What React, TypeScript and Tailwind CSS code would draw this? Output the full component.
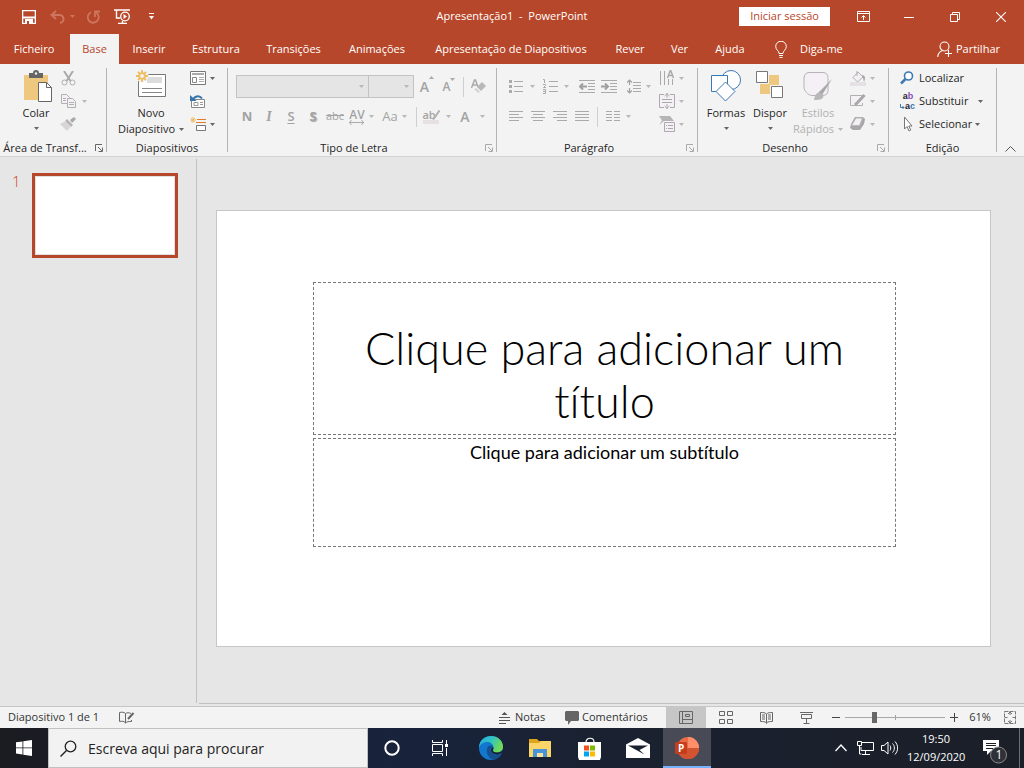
import type { ReactNode } from 'react';

type SvgProps = { w: number; h: number; children: ReactNode; className?: string };

function Svg({ w, h, children, className = '' }: SvgProps) {
  return (
    <svg width={w} height={h} viewBox={`0 0 ${w} ${h}`} fill="none" aria-hidden="true" className={`shrink-0 ${className}`}>
      {children}
    </svg>
  );
}

function Caret({ className = 'text-[#666]' }: { className?: string }) {
  return (
    <Svg w={5} h={3} className={className}>
      <path d="M0 0h5L2.5 3z" fill="currentColor" />
    </Svg>
  );
}

type ToolProps = { label: string; className?: string; caret?: string; dim?: boolean; children: ReactNode };

// icon button, optionally followed by a narrow drop-down arrow
function Tool({ label, className = 'w-[22px]', caret, dim = false, children }: ToolProps) {
  return (
    <button aria-label={label} className="flex items-center h-[22px] hover:bg-[#dcdcdc]">
      <span className={`flex items-center justify-center ${className}`}>{children}</span>
      {caret && (
        <span className={`flex items-center justify-center ${caret}`}>
          <Caret className={dim ? 'text-[#b8b8b8]' : 'text-[#666]'} />
        </span>
      )}
    </button>
  );
}

function Separator() {
  return <div className="w-px my-1 bg-[#b4b4b4] shrink-0"></div>;
}

type GroupProps = { title: string; className: string; launcher?: 'dark' | 'light'; children: ReactNode };

function Group({ title, className, launcher, children }: GroupProps) {
  return (
    <section className={`flex flex-col shrink-0 ${className}`}>
      <div className="flex h-[76px]">{children}</div>
      <div className="flex items-center h-4">
        <h2 className={`grow text-center whitespace-nowrap ${launcher ? 'pr-[5px]' : ''}`}>{title}</h2>
        {launcher && (
          <button aria-label={`Opções de ${title}`} className={`mr-[3px] ${launcher === 'dark' ? 'text-[#666]' : 'text-[#aaa]'}`}>
            <Svg w={8} h={8}>
              <path d="M.5 7V.5H7M3 3l4 4M7.5 3.5v4h-4" stroke="currentColor" />
            </Svg>
          </button>
        )}
      </div>
    </section>
  );
}

const TABS = [
  { name: 'Ficheiro', width: 'w-[70px] pr-[2px]' },
  { name: 'Base', width: 'w-[49px]' },
  { name: 'Inserir', width: 'w-[60px]' },
  { name: 'Estrutura', width: 'w-[74px]' },
  { name: 'Transições', width: 'w-[81px]' },
  { name: 'Animações', width: 'w-[86px]' },
  { name: 'Apresentação de Diapositivos', width: 'w-[182px]' },
  { name: 'Rever', width: 'w-[56px]' },
  { name: 'Ver', width: 'w-[43px]' },
  { name: 'Ajuda', width: 'w-[58px]' },
];

function TitleBar() {
  return (
    <header className="grid grid-cols-[1fr_auto_1fr] items-center h-[34px] pb-px text-white">
      <div className="flex items-center pl-[22px]">
        <button aria-label="Guardar">
          <Svg w={14} h={14}>
            <path d="M.5.5h13v13H.5z" stroke="white" strokeWidth="1.6" />
            <path d="M1 6.5h12v2H1zM3 9h8v5H3z" fill="white" />
            <path d="M5 11h2v3H5z" fill="#b7472a" />
          </Svg>
        </button>
        <button aria-label="Anular" className="flex items-center gap-[5px] ml-[14px]">
          <Svg w={15} h={14}>
            <path d="M1 5h8a4 4 0 0 1 1 8M6 1L1.5 5 6 9" stroke="#cd765f" strokeWidth="2" />
          </Svg>
          <Caret className="text-[#cd765f]" />
        </button>
        <button aria-label="Repetir" className="ml-[11px]">
          <Svg w={14} h={14}>
            <path d="M5 2.2A5.5 5.5 0 1 0 10 2.5M9 7V1.5h5" stroke="#cd765f" strokeWidth="1.8" />
          </Svg>
        </button>
        <button aria-label="Iniciar apresentação" className="ml-[14px]">
          <Svg w={17} h={15}>
            <path d="M0 1h16M2.5 1v8H6M4 14.5h9M8.5 12v2" stroke="white" strokeWidth="1.4" />
            <circle cx="11" cy="7.5" r="4.3" stroke="white" strokeWidth="1.3" />
            <path d="M9.5 5v5L13 7.5z" fill="white" />
          </Svg>
        </button>
        <button aria-label="Personalizar barra de acesso rápido" className="ml-[18px]">
          <Svg w={5} h={7}>
            <path d="M0 .5h5" stroke="white" />
            <path d="M0 3h5L2.5 6.5z" fill="white" />
          </Svg>
        </button>
      </div>
      <h1 className="whitespace-pre">Apresentação1  -  PowerPoint</h1>
      <div className="flex items-center justify-end">
        <button className="w-[91px] h-[19px] mr-[10px] bg-white text-[#b7472a]">Iniciar sessão</button>
        <button aria-label="Opções de apresentação do friso" className="flex justify-center w-[46px]">
          <Svg w={13} h={11}>
            <path d="M.5.5h12v10H.5zM1 2.5h11M6.5 9V5M4.5 6.5l2-2 2 2" stroke="white" />
          </Svg>
        </button>
        <button aria-label="Minimizar" className="flex justify-center w-[46px]">
          <Svg w={10} h={10}>
            <path d="M0 5.5h10" stroke="white" />
          </Svg>
        </button>
        <button aria-label="Restaurar" className="flex justify-center w-[46px]">
          <Svg w={10} h={10}>
            <path d="M.5 2.5h7v7h-7zM2.5 2.5v-2h7v7h-2" stroke="white" />
          </Svg>
        </button>
        <button aria-label="Fechar" className="flex justify-center w-[46px]">
          <Svg w={10} h={10}>
            <path d="M0 0l10 10M10 0L0 10" stroke="white" strokeWidth="1.1" />
          </Svg>
        </button>
      </div>
    </header>
  );
}

function TabRow() {
  return (
    <nav className="flex items-center h-[30px] text-white">
      {TABS.map((tab) => (
        <button
          key={tab.name}
          className={`h-full shrink-0 whitespace-nowrap ${tab.width} ${tab.name === 'Base' ? 'bg-[#f3f3f3] text-[#b7472a]' : ''}`}
        >
          {tab.name}
        </button>
      ))}
      <button className="flex items-center gap-[13px] ml-4">
        <Svg w={12} h={17}>
          <path d="M4 12.5c0-3-3.3-3.500-3.300-7a5.200 5.200 0 0 1 10.600 0c0 3.500-3.300 4-3.300 7zM4 14.500h4M4.500 16.500h3" stroke="white" />
        </Svg>
        Diga-me
      </button>
      <button className="flex items-center gap-[4px] ml-auto mr-6">
        <Svg w={15} h={17}>
          <circle cx="7.500" cy="5.500" r="4.500" stroke="white" strokeWidth="1.100" />
          <path d="M.7 16c.3-3.500 2-5.500 4.500-6.300M11.500 9v7M8 12.500h7" stroke="white" strokeWidth="1.100" />
        </Svg>
        Partilhar
      </button>
    </nav>
  );
}

function Ribbon() {
  return (
    <div className="flex h-[93px] bg-[#f3f3f3] border-b border-[#d2d2d2] text-[#262626] overflow-hidden">
      <Group title="Área de Transf..." className="w-[106px]" launcher="dark">
        <button className="flex flex-col items-center w-[50px] ml-[11px] pt-[6px]">
          <Svg w={29} h={33} className="ml-1">
            <path d="M0 5h24v25H0z" fill="#edc87e" />
            <path d="M5 3h4a3 3 0 0 1 6 0h4v5H5z" fill="#666" />
            <circle cx="12" cy="3.500" r="1.200" fill="#f3f3f3" />
            <path d="M14.500 12.500h8l5 5v14h-13z" fill="white" stroke="#666" />
            <path d="M22.500 12.500v5h5" stroke="#666" />
          </Svg>
          <span className="leading-4 mt-[2px]">Colar</span>
          <span className="flex items-center h-[14px]"><Caret /></span>
        </button>
        <div className="flex flex-col gap-px pt-[3px] -ml-[4px]">
          <Tool label="Cortar">
            <Svg w={15} h={15}>
              <path d="M3 0l6.500 10M12 0L5.500 10" stroke="#aaa" strokeWidth="2" />
              <circle cx="3.500" cy="11.500" r="2.500" stroke="#b0b0b0" />
              <circle cx="11.500" cy="11.500" r="2.500" stroke="#b0b0b0" />
            </Svg>
          </Tool>
          <Tool label="Copiar" caret="w-[11px]" dim>
            <Svg w={15} h={14}>
              <path d="M.5.5h5l3 3v6h-8z" fill="#f5eff6" stroke="#b0b0b0" />
              <path d="M6.500 4.500h5l3 3v6h-8z" fill="#f5eff6" stroke="#b0b0b0" />
              <path d="M2 4.500h3M2 6.500h3M8 8.500h5M8 10.500h5" stroke="#b0b0b0" />
            </Svg>
          </Tool>
          <Tool label="Pincel de Formatação">
            <Svg w={16} h={14}>
              <path d="M10 3l4-3 2 2-4 4z" fill="#a8a8a8" />
              <path d="M7 2l6 6-2 2-6-6z" fill="#b5b5b5" />
              <path d="M5 4.500l5.500 5.500L7 14 0 7z" fill="#d8d4d8" />
            </Svg>
          </Tool>
        </div>
      </Group>
      <Separator />

      <Group title="Diapositivos" className="w-[120px]">
        <button className="flex flex-col items-center w-[72px] ml-[8px] pt-[6px]">
          <Svg w={31} h={29}>
            <path d="M2.500 4.500h27v22h-27z" fill="white" stroke="#777" />
            <path d="M6 18.500h20M6 22.500h20" stroke="#888" />
            <path d="M11 7h15v6H11z" fill="#dcdcdc" />
            <circle cx="6" cy="6" r="6.500" fill="#f3f3f3" />
            <circle cx="6" cy="6" r="2.800" stroke="#edbd63" strokeWidth="1.800" />
            <path d="M6 0v3M6 9v3M0 6h3M9 6h3M2 2l2 2M8 8l2 2M10 2L8 4M4 8l-2 2" stroke="#edbd63" strokeWidth="1.800" />
          </Svg>
          <span className="leading-4 mt-[6px]">Novo</span>
          <span className="flex items-center gap-1 leading-4 whitespace-nowrap">Diapositivo <Caret /></span>
        </button>
        <div className="flex flex-col gap-px pt-[3px]">
          <Tool label="Esquema" caret="w-[6px]">
            <Svg w={16} h={14}>
              <path d="M.5.5h15v13H.5z" fill="white" stroke="#777" />
              <path d="M2 3h12" stroke="#aaa" strokeWidth="2" />
              <path d="M2.500 6.500h4v5h-4z" stroke="#888" />
              <path d="M9 6.500h5M9 8.500h5M9 10.500h5" stroke="#aaa" />
            </Svg>
          </Tool>
          <Tool label="Repor">
            <Svg w={16} h={14}>
              <path d="M1.500 5.500h13v8h-13z" fill="white" stroke="#888" />
              <path d="M4 8.500h4v3H4zM10 8.500h3M10 10.500h3" stroke="#999" />
              <path d="M3 6c1-3.500 6-5.500 9-1.500" stroke="#3975ad" strokeWidth="2" />
              <path d="M0 1v6h6.500z" fill="#3975ad" />
            </Svg>
          </Tool>
          <Tool label="Secção" caret="w-[6px]">
            <Svg w={16} h={15}>
              <path d="M3 0v6M0 3h6M1 1l4 4M5 1L1 5" stroke="#edbd63" />
              <path d="M7 2.500h9M6 5.500h10" stroke="#e07b29" />
              <path d="M6.500 8.500h9v5h-9z" fill="white" stroke="#777" />
            </Svg>
          </Tool>
        </div>
      </Group>
      <Separator />

      <Group title="Tipo de Letra" className="w-[268px]" launcher="light">
        <div className="flex flex-col gap-[7px] pl-2 pt-[11px] text-[#a3a3a3]">
          <div className="flex items-center h-[23px]">
            <FontSelect label="Tipo de letra" className="w-[133px]" />
            <FontSelect label="Tamanho" className="w-[46px] -ml-px" />
            <span className="w-[2px]"></span>
            <Tool label="Aumentar tamanho">
              <span className="text-[14px] font-semibold">A</span>
              <Svg w={5} h={3} className="self-start"><path d="M0 3h5L2.500 0z" fill="#aaa" /></Svg>
            </Tool>
            <Tool label="Diminuir tamanho">
              <span className="text-[12px] font-semibold">A</span>
              <Svg w={5} h={3} className="self-start"><path d="M0 0h5L2.500 3z" fill="#aaa" /></Svg>
            </Tool>
            <div className="w-px h-5 ml-[3px] bg-[#cfcfcf]"></div>
            <Tool label="Limpar formatação" className="w-[28px]">
              <Svg w={15} h={15}>
                <path d="M.5 9l3-8h1l2.500 7M1.500 6h4.500" stroke="#aaa" strokeWidth="1.500" />
                <path d="M11 3l4 4-5 5-4-4z" fill="#b8b8b8" />
                <path d="M5 9l4 4-1.500 1L3.500 10.500z" fill="#d0d0d0" />
              </Svg>
            </Tool>
          </div>
          <div className="flex items-center h-[23px] text-[13px]">
            <Tool label="Negrito"><b>N</b></Tool>
            <Tool label="Itálico"><i className="font-['Liberation_Serif',serif] font-bold text-[14px]">I</i></Tool>
            <Tool label="Sublinhado"><u className="font-semibold underline-offset-2">S</u></Tool>
            <Tool label="Sombra"><b className="[text-shadow:1px_1px_1px_#aaa]">S</b></Tool>
            <Tool label="Rasurado"><s className="text-[11px]">abc</s></Tool>
            <Tool label="Espaçamento entre carateres" caret="w-[6px]" dim>
              <span className="flex flex-col items-center">
                <span className="text-[12px] leading-[11px] font-semibold">AV</span>
                <Svg w={15} h={5}><path d="M0 2.500h15M2.500 0L.5 2.500l2 2.500M12.500 0l2 2.500-2 2.500" stroke="#aaa" /></Svg>
              </span>
            </Tool>
            <span className="w-[5px]"></span>
            <Tool label="Maiúsculas/Minúsculas" caret="w-[6px]" dim>Aa</Tool>
            <div className="w-px h-5 ml-[9px] bg-[#cfcfcf]"></div>
            <Tool label="Cor de realce" className="w-[28px]" caret="w-[6px]" dim>
              <span className="flex flex-col items-center">
                <span className="flex items-end text-[11px] leading-[11px] font-semibold">
                  ab
                  <Svg w={8} h={10} className="-ml-1"><path d="M7.500.5L3 7 1 9.500" stroke="#b0b0b0" strokeWidth="2" /></Svg>
                </span>
                <span className="w-4 h-1 bg-[#e4e0e4]"></span>
              </span>
            </Tool>
            <Tool label="Cor do tipo de letra" className="w-[28px]" caret="w-[6px]" dim>
              <span className="text-[14px] font-semibold">A</span>
            </Tool>
          </div>
        </div>
      </Group>
      <Separator />

      <Group title="Parágrafo" className="w-[200px]" launcher="light">
        <div className="flex flex-col gap-[7px] w-[154px] pl-2 pt-[11px]">
          <div className="flex items-center h-[23px]">
            <Tool label="Marcas" caret="w-[10px]" dim>
              <Svg w={14} h={15}>
                <path d="M5 2.500h9M5 7.500h9M5 12.500h9" stroke="#aaa" />
                <path d="M0 1h3v3H0zM0 6h3v3H0zM0 11h3v3H0z" fill="#aaa" />
              </Svg>
            </Tool>
            <Tool label="Numeração" className="w-[26px]" caret="w-[6px]" dim>
              <Svg w={15} h={15}>
                <path d="M6 2.500h9M6 7.500h9M6 12.500h9M0 .5h1.500V4M0 5.500h2.500v1L.5 8.500H3M0 10.500h2.500v4H0M0 12.500h2" stroke="#aaa" />
              </Svg>
            </Tool>
            <span className="w-[7px]"></span>
            <Tool label="Diminuir nível">
              <Svg w={16} h={13}>
                <path d="M0 .5h16M9 3.500h7M9 6.500h7M9 9.500h7M0 12.500h16" stroke="#aaa" />
                <path d="M1 6.500h7M4 3.500l-3 3 3 3" stroke="#a0a0a0" strokeWidth="2" />
              </Svg>
            </Tool>
            <Tool label="Aumentar nível">
              <Svg w={16} h={13}>
                <path d="M0 .5h16M9 3.500h7M9 6.500h7M9 9.500h7M0 12.500h16" stroke="#aaa" />
                <path d="M0 6.500h7M4 3.500l3 3-3 3" stroke="#a0a0a0" strokeWidth="2" />
              </Svg>
            </Tool>
            <span className="w-[3px]"></span>
            <Tool label="Espaçamento entre linhas" caret="w-[6px]" dim>
              <Svg w={14} h={15}>
                <path d="M6 3.500h8M6 6.500h8M6 9.500h8M6 12.500h8" stroke="#aaa" />
                <path d="M2.500 1v5M2.500 9v5M0 3.500L2.500 1 5 3.500M0 11.500L2.500 14 5 11.500" stroke="#a0a0a0" strokeWidth="1.200" />
              </Svg>
            </Tool>
          </div>
          <div className="flex items-center h-[23px]">
            <Tool label="Alinhar à esquerda">
              <Svg w={14} h={11}><path d="M0 .5h14M0 3.500h10M0 6.500h14M0 9.500h10" stroke="#aaa" /></Svg>
            </Tool>
            <Tool label="Centrar">
              <Svg w={14} h={11}><path d="M0 .5h14M2 3.500h10M0 6.500h14M2 9.500h10" stroke="#aaa" /></Svg>
            </Tool>
            <Tool label="Alinhar à direita">
              <Svg w={14} h={11}><path d="M0 .5h14M4 3.500h10M0 6.500h14M4 9.500h10" stroke="#aaa" /></Svg>
            </Tool>
            <Tool label="Justificar">
              <Svg w={14} h={11}><path d="M0 .5h14M0 3.500h14M0 6.500h14M0 9.500h14" stroke="#aaa" /></Svg>
            </Tool>
            <div className="w-px h-5 mx-1 bg-[#cfcfcf]"></div>
            <Tool label="Colunas" caret="w-[8px]" dim>
              <Svg w={14} h={11}><path d="M0 .5h14M0 3.500h14M0 6.500h14M0 9.500h14" stroke="#aaa" strokeDasharray="6 2" /></Svg>
            </Tool>
          </div>
        </div>
        <div className="flex flex-col gap-px pl-[5px] pt-[3px]">
          <Tool label="Direção do texto" caret="w-[6px]" dim>
            <Svg w={16} h={16}>
              <path d="M1.500 1v14M5.500 1v14M9.500 9v6M13.500 9v6" stroke="#aaa" />
              <path d="M8.500 8l3-8 3 8M9.500 5.500h4" stroke="#aaa" strokeWidth="1.500" />
            </Svg>
          </Tool>
          <Tool label="Alinhar texto" caret="w-[6px]" dim>
            <Svg w={16} h={16}>
              <path d="M5 1.500H.5v13H5M11 1.500h4.500v13H11" fill="#f5eff6" stroke="#b0a8b0" />
              <path d="M8 0v5M8 11v5M5.500 3L8 .7 10.500 3M5.500 13L8 15.300l2.500-2.300M3 6.500h10M3 9.500h10" stroke="#aaa" />
            </Svg>
          </Tool>
          <Tool label="Converter em SmartArt" caret="w-[6px]" dim>
            <Svg w={16} h={16}>
              <path d="M0 0h11l4 5H5L0 9l3-4.500z" fill="#b5b5b5" />
              <path d="M5.500 6.500h10v9h-10z" fill="#f5eff6" stroke="#b0a8b0" />
              <path d="M7 9.500h1M9 9.500h5M7 12.500h1M9 12.500h5" stroke="#aaa" />
            </Svg>
          </Tool>
        </div>
      </Group>
      <Separator />

      <Group title="Desenho" className="w-[190px]" launcher="light">
        <button className="flex flex-col items-center w-[44px] ml-[6px] pt-[6px]">
          <Svg w={30} h={32}>
            <circle cx="20" cy="10" r="9.500" fill="white" stroke="#3c78b4" />
            <path d="M.5 5.500h16v16H.5z" fill="white" stroke="#3c78b4" />
            <path d="M14.500 12L24 21.500 14.500 31 5 21.500z" fill="white" stroke="#3c78b4" />
          </Svg>
          <span className="leading-4 mt-[3px]">Formas</span>
          <span className="flex items-center h-[14px]"><Caret /></span>
        </button>
        <button className="flex flex-col items-center w-[44px] pt-[6px]">
          <Svg w={28} h={32}>
            <path d="M13 5h10v10h-9v9H4V14h9z" fill="#edc87e" />
            <path d="M.5 1.500h11v11H.5zM15.500 16.500h11v11h-11z" fill="white" stroke="#777" />
          </Svg>
          <span className="leading-4 mt-[3px]">Dispor</span>
          <span className="flex items-center h-[14px]"><Caret /></span>
        </button>
        <button className="flex flex-col items-center w-[52px] pt-[6px] text-[#b1b1b1]">
          <Svg w={30} h={32}>
            <path d="M6 2.500h14c3 0 5 2 5 5v13c0 4-3 5-6 5H9c-4 0-8-5-8-8V8c0-3 2-5.500 5-5.500z" fill="#f5eff6" stroke="#b4b4b4" />
            <path d="M29 9L19 25l-4-2z" fill="#a8a8a8" />
            <path d="M18 23c-5-1-6 2-7 7 6 0 11-1 9-6z" fill="#b8b8b8" />
          </Svg>
          <span className="leading-4 mt-[3px]">Estilos</span>
          <span className="flex items-center gap-1 leading-4 whitespace-nowrap">Rápidos <Caret className="text-[#b8b8b8]" /></span>
        </button>
        <div className="flex flex-col gap-px pl-[4px] pt-[3px]">
          <Tool label="Preenchimento da forma" className="w-[20px]" caret="w-[8px]" dim>
            <Svg w={17} h={16}>
              <path d="M8 2l5 5-5.500 5L3 7.500zM7 6V1" fill="#f5eff6" stroke="#b0b0b0" />
              <path d="M12 5c3 0 4 3 2 7l-1-4z" fill="#a8a8a8" />
              <path d="M0 12h16v4H0z" fill="#e4e0e4" />
            </Svg>
          </Tool>
          <Tool label="Contorno da forma" className="w-[20px]" caret="w-[8px]" dim>
            <Svg w={16} h={14}>
              <path d="M12 1.500H.5v10h12V9" fill="#f5eff6" stroke="#b0b0b0" />
              <path d="M14.500 1L8 8l-3 3" stroke="#a8a8a8" strokeWidth="3" />
            </Svg>
          </Tool>
          <Tool label="Efeitos da forma" className="w-[20px]" caret="w-[8px]" dim>
            <Svg w={16} h={14}>
              <path d="M5 0h8l2 2-1 5-4 6H3L0 11 1 7z" fill="#a8a8a8" />
              <path d="M6 1h6.500L9.500 8.500h-8z" fill="#f5eff6" stroke="#b8b8b8" />
            </Svg>
          </Tool>
        </div>
      </Group>
      <Separator />

      <Group title="Edição" className="w-[107px]">
        <div className="flex flex-col gap-px pl-[11px] pt-[3px]">
          <button className="flex items-center gap-[5px] h-[22px]">
            <Svg w={14} h={14}>
              <circle cx="8.500" cy="5" r="4" fill="white" stroke="#3c78b4" strokeWidth="1.600" />
              <path d="M5.500 8L1 12.500" stroke="#3c78b4" strokeWidth="2.500" />
            </Svg>
            Localizar
          </button>
          <button className="flex items-center gap-[3px] h-[22px] whitespace-nowrap">
            <span className="flex flex-col w-4 text-[9px] font-bold font-['Liberation_Sans',sans-serif]">
              <span className="leading-[10px]">a<span className="text-[#8a4fbe]">b</span></span>
              <span className="flex items-center leading-[10px]">
                <Svg w={5} h={5}><path d="M.5 0v3.500H4M2.500 2L4 3.500 2.500 5" stroke="#3c78b4" /></Svg>
                <span>a<span className="text-[#3c78b4]">c</span></span>
              </span>
            </span>
            Substituir
            <span className="pl-[7px]"><Caret /></span>
          </button>
          <button className="flex items-center gap-[5px] h-[22px] whitespace-nowrap">
            <Svg w={14} h={16}>
              <path d="M4.500 1v12l2.500-2.500 2 4.500 1.800-1-2-4H12z" fill="white" stroke="#777" />
            </Svg>
            <span className="flex items-center gap-[3px]">Selecionar <Caret /></span>
          </button>
        </div>
      </Group>
      <Separator />
      <button aria-label="Fechar o friso" className="flex items-end ml-auto mr-2 pb-1">
        <Svg w={11} h={6}>
          <path d="M.5 5.500l5-5 5 5" stroke="#555" />
        </Svg>
      </button>
    </div>
  );
}

function FontSelect({ label, className }: { label: string; className: string }) {
  return (
    <div className={`relative shrink-0 ${className}`}>
      <select aria-label={label} disabled className="block w-full h-[23px] appearance-none bg-[#e5e5e5] border border-[#c3c3c3]">
        <option></option>
      </select>
      <span className="absolute right-[5px] top-[10px]"><Caret className="text-[#b8b8b8]" /></span>
    </div>
  );
}

function StatusBar() {
  return (
    <footer className="flex items-center h-[22px] bg-[#f3f3f3] border-t border-[#c6c6c6] text-[#333]">
      <span className="w-[111px] pl-2 whitespace-nowrap">Diapositivo 1 de 1</span>
      <button aria-label="Verificação ortográfica" className="ml-2">
        <Svg w={16} h={13}>
          <path d="M12 2.500c-2-1-4-1-5.500 0C5 1 3 1 .5 1.500v9c2.500-.5 4.500-.5 6 1.500 1.500-1.500 3-1.500 6-1.500V9M6.500 2.500V12" stroke="#666" />
          <path d="M14.500 2L9 8" stroke="#666" strokeWidth="2" />
        </Svg>
      </button>
      <button className="flex items-center gap-[5px] ml-auto">
        <Svg w={11} h={12}>
          <path d="M0 5.500h11M0 8.500h11M0 11.500h7" stroke="#555" />
          <path d="M2.500 3h6l-3-3z" fill="#555" />
        </Svg>
        <span className="w-[50px] text-left">Notas</span>
      </button>
      <button className="flex items-center gap-[3px]">
        <Svg w={14} h={14}>
          <path d="M1 0h12l1 1v8l-1 1H6l-3 4v-4H1L0 9V1z" fill="#666" />
        </Svg>
        <span className="w-[84px] text-left">Comentários</span>
      </button>
      <button aria-label="Normal" className="flex items-center justify-center w-10 h-full bg-[#c6c6c6]">
        <Svg w={14} h={13}>
          <path d="M.5.5h13v12H.5zM3.500 1v11M4 8.500h9M6.500 3.500h4v2h-4z" stroke="#666" />
        </Svg>
      </button>
      <button aria-label="Organização de Diapositivos" className="flex items-center justify-center w-10 h-full">
        <Svg w={14} h={13}>
          <path d="M.5.5h5v4h-5zM8.500.5h5v4h-5zM.5 8.500h5v4h-5zM8.500 8.500h5v4h-5z" stroke="#666" />
        </Svg>
      </button>
      <button aria-label="Vista de Leitura" className="flex items-center justify-center w-10 h-full">
        <Svg w={13} h={12}>
          <path d="M6.500 2C5 .5 3 .5.5.5v9c2.500 0 4.500 0 6 1.500 1.500-1.500 3.500-1.500 6-1.500v-9c-2.500 0-4.500 0-6 1.500zv9.500M2 3h3M2 5h3M2 7h3M8 3h3M8 5h3M8 7h3" stroke="#666" />
        </Svg>
      </button>
      <button aria-label="Apresentação de Diapositivos" className="flex items-center justify-center w-10 h-full">
        <Svg w={13} h={12}>
          <path d="M0 .5h13M1.500 2.500h10v4h-10zM6.500 7v4M3.500 11.500h6" stroke="#666" />
        </Svg>
      </button>
      <button aria-label="Reduzir" className="ml-[5px]">
        <Svg w={9} h={9}><path d="M1 4.500h8" stroke="#444" /></Svg>
      </button>
      <div className="relative flex items-center w-[100px] ml-[5px]">
        <span className="absolute left-1/2 w-px h-[5px] bg-[#a0a0a0]"></span>
        <input
          type="range"
          aria-label="Zoom"
          defaultValue={28}
          className="relative w-full h-[11px] appearance-none bg-[linear-gradient(#a8a8a8,#a8a8a8)] bg-[length:100%_1px] bg-center bg-no-repeat [&::-webkit-slider-thumb]:appearance-none [&::-webkit-slider-thumb]:w-[5px] [&::-webkit-slider-thumb]:h-[11px] [&::-webkit-slider-thumb]:bg-[#666]"
        />
      </div>
      <button aria-label="Ampliar" className="ml-[5px]">
        <Svg w={9} h={9}><path d="M0 4.500h8M4.500 0v9" stroke="#444" /></Svg>
      </button>
      <button className="w-[36px] pl-[6px]">61%</button>
      <button aria-label="Ajustar à janela" className="ml-[9px] mr-2">
        <Svg w={12} h={13}>
          <path d="M.5.5h11v12H.5zM6 1v3M6 9v3M1 6.500h2.500M8.500 6.500H11" stroke="#777" strokeDasharray="4 1" />
          <path d="M4 3l2-2 2 2M4 10l2 2 2-2" stroke="#777" />
        </Svg>
      </button>
    </footer>
  );
}

function Taskbar() {
  return (
    <div className="flex h-10 text-white bg-[linear-gradient(90deg,#1b1c22_0%,#1b1c24_5%,#18233c_38%,#1a2130_60%,#1b1f28_100%)]">
      <button aria-label="Iniciar" className="flex items-center justify-center w-12 shrink-0">
        <Svg w={16} h={16}>
          <path d="M0 2.300l6.500-.9v6.100H0zM7.300 1.300L16 0v7.500H7.300zM0 8.300h6.500v6.200L0 13.600zM7.300 8.300H16V16l-8.700-1.300z" fill="white" />
        </Svg>
      </button>
      <label className="flex items-center w-[320px] shrink bg-[#f2f2f2] border border-[#c0c0c0] pl-[11px]">
        <Svg w={17} h={17}>
          <circle cx="10.500" cy="6.500" r="5.300" stroke="#222" strokeWidth="1.300" />
          <path d="M6.500 10.500L.5 16.500" stroke="#222" strokeWidth="1.400" />
        </Svg>
        <input
          type="text"
          aria-label="Pesquisar"
          placeholder="Escreva aqui para procurar"
          className="grow min-w-0 pl-[11px] bg-transparent outline-none text-[14px] text-black placeholder:text-[#222]"
        />
      </label>
      <button aria-label="Cortana" className="flex items-center justify-center w-12">
        <Svg w={16} h={16}><circle cx="8" cy="8" r="6.700" stroke="white" strokeWidth="2" /></Svg>
      </button>
      <button aria-label="Vista de Tarefas" className="flex items-center justify-center w-12 mr-[3px]">
        <Svg w={16} h={16}>
          <path d="M.5 0v2.500h10V0M.5 4.500h10v7H.5zM.5 16v-2.500h10V16M14.500 0v4M14.500 8v8" stroke="white" />
          <path d="M13 4h3v3h-3z" fill="white" />
        </Svg>
      </button>
      <div className="flex gap-px">
        <button aria-label="Microsoft Edge" className="flex items-center justify-center w-12">
          <Svg w={24} h={24}>
            <defs>
              <linearGradient id="edgeTop" x1="0" y1="0" x2="1" y2="0.400">
                <stop offset="0" stopColor="#2aa7e0" />
                <stop offset=".5" stopColor="#2fc3c8" />
                <stop offset="1" stopColor="#6fdc55" />
              </linearGradient>
            </defs>
            <circle cx="12" cy="12" r="12" fill="#1177cf" />
            <path d="M0 12C0 4 6 0 12 0c7 0 12 5 12 10.500 0 4-3 6-6.500 6-3 0-4-1.200-4-2 0-.8 1-1.300 1-3C14.500 8.500 12 6 8.500 6 4 6 1 8.500 0 12z" fill="url(#edgeTop)" />
            <path d="M9 10.500c-2.500 4-1 11 5 13.200 4-.6 7-3 8.500-6-5 2.500-11 .5-11-4 0-2 1-3 2.500-3.500-1.500-1-3.500-1-5 .3z" fill="#15508f" />
            <path d="M13.300 11c-2 1.800-1.800 5 .7 6.500 3 1.800 6.500 1.500 9.500-1l.7 1-1 2H25V13l-3 2.500c-3 1.500-8 1.200-8-1 0-1 .8-1.500.5-2.700z" fill="#1b2535" />
          </Svg>
        </button>
        <button aria-label="Explorador de Ficheiros" className="flex items-center justify-center w-12">
          <Svg w={22} h={18}>
            <path d="M0 0h8l2 2h11v6H0z" fill="#e0a31c" />
            <path d="M0 4h10l2-2h10v16H0z" fill="#fbd568" />
            <path d="M4 18v-8h14v8h-4v-4H8v4z" fill="#4794d8" />
            <path d="M8 14h6v4H8z" fill="#fbe39a" />
          </Svg>
        </button>
        <button aria-label="Microsoft Store" className="flex items-center justify-center w-12">
          <Svg w={23} h={23}>
            <path d="M8 5c0-5 8-5 8 0" stroke="white" strokeWidth="1.200" />
            <path d="M0 5h23v15l-1 3H1l-1-3z" fill="white" />
            <path d="M6 8.500h5v5H6z" fill="#f25022" />
            <path d="M12 8.500h5v5h-5z" fill="#7fba00" />
            <path d="M6 14.500h5v5H6z" fill="#00a4ef" />
            <path d="M12 14.500h5v5h-5z" fill="#ffb900" />
          </Svg>
        </button>
        <button aria-label="Correio" className="flex items-center justify-center w-12">
          <Svg w={24} h={20}>
            <path d="M0 6.500L12 0l12 6.500V20H0z" fill="white" />
            <path d="M2 7.500h20l-8.500 4.500 5 4.500z" fill="#1a2030" />
          </Svg>
        </button>
        <button aria-label="PowerPoint" className="flex items-center justify-center w-12 bg-[#484b55] border-b-2 border-[#76b2ff] pt-[2px]">
          <Svg w={24} h={22}>
            <circle cx="13" cy="11" r="11" fill="#ed6c47" />
            <path d="M13 0a11 11 0 0 1 11 11H13z" fill="#ff8f6b" />
            <path d="M2.700 15A11 11 0 0 0 24 11H13z" fill="#d35230" />
            <rect x="0" y="5" width="12" height="12" rx="1" fill="#c43e1c" />
            <text x="3" y="14.500" fontSize="10" fontWeight="bold" fill="white" fontFamily="Open Sans, sans-serif">P</text>
          </Svg>
        </button>
      </div>
      <div className="flex items-center ml-auto">
        <button aria-label="Mostrar ícones ocultos" className="mr-[10px]">
          <Svg w={12} h={8}><path d="M.5 7L6 1l5.500 6" stroke="white" strokeWidth="1.300" /></Svg>
        </button>
        <button aria-label="Rede" className="mr-[7px]">
          <Svg w={17} h={14}>
            <path d="M5 1.500h11.500v8H4V6M8.500 10v3M5 13.500h8M.5.500h4v4h-4zM2.500 5v8h2" stroke="white" />
          </Svg>
        </button>
        <button aria-label="Volume" className="mr-[9px]">
          <Svg w={17} h={14}>
            <path d="M.5 4.500h2.500l4-3.500v12L3 9.500H.5zM9 4.500c1 1.500 1 3.500 0 5M11.500 2.500c2.500 2.500 2.500 6.500 0 9M14 .5c3.500 4 3.500 9 0 13" stroke="white" />
          </Svg>
        </button>
        <button className="w-[58px] text-[11px] leading-[18px] text-center">
          <span className="block">19:50</span>
          <span className="block">12/09/2020</span>
        </button>
        <button aria-label="Notificações" className="relative w-[24px] h-10 ml-[18px] mr-3">
          <Svg w={24} h={40}>
            <path d="M0 12h16v11h-8l-4 4v-4H0z" fill="white" />
            <path d="M3 15.500h10M3 17.500h10M3 20.500h7" stroke="#1b1f28" />
            <circle cx="15.500" cy="27" r="8" fill="#2f3138" stroke="#8a8a8a" />
          </Svg>
          <span className="absolute left-[12px] top-[18px] w-[8px] text-center text-[12px]">1</span>
        </button>
        <div className="w-px h-full mr-1 bg-[#6b6e75]"></div>
      </div>
    </div>
  );
}

export default function App() {
  return (
    <div className="flex flex-col h-screen overflow-hidden text-[11px] font-['Open_Sans',sans-serif] bg-[#e6e6e6]">
      <div className="bg-[#b7472a]">
        <TitleBar />
        <TabRow />
      </div>
      <Ribbon />
      <main className="flex grow min-h-0">
        <aside className="flex items-start w-[197px] shrink-0 mt-[2px] mb-[3px] pt-[14px] pl-3 border-r border-[#c0c0c0]">
          <span className="w-5 text-[15px] leading-4 text-[#d24726] font-light">1</span>
          <button aria-label="Diapositivo 1" className="w-[146px] h-[85px] border-3 border-[#b7472a] bg-white outline outline-[#e0e0e0] -outline-offset-4"></button>
        </aside>
        <section className="flex flex-col grow min-w-0 ml-[2px] mb-[2px] pl-[17px] pr-[33px] pt-[53px] border-b border-[#c0c0c0]">
          <div className="w-full aspect-[775/437] pl-24 pr-[94px] pt-[71px] bg-white border border-[#c6c6c6] font-['Lato',sans-serif] text-black text-center [font-variant-ligatures:none]">
            <h2 className="flex items-end justify-center h-[153px] px-10 pb-[6px] text-[45px] leading-[53px] font-light border border-dashed border-[#777]">
              Clique para adicionar um título
            </h2>
            <p className="h-[109px] mt-[3px] pt-[3px] text-[18px] leading-5 border border-dashed border-[#777]">
              Clique para adicionar um subtítulo
            </p>
          </div>
        </section>
      </main>
      <StatusBar />
      <Taskbar />
    </div>
  );
}
